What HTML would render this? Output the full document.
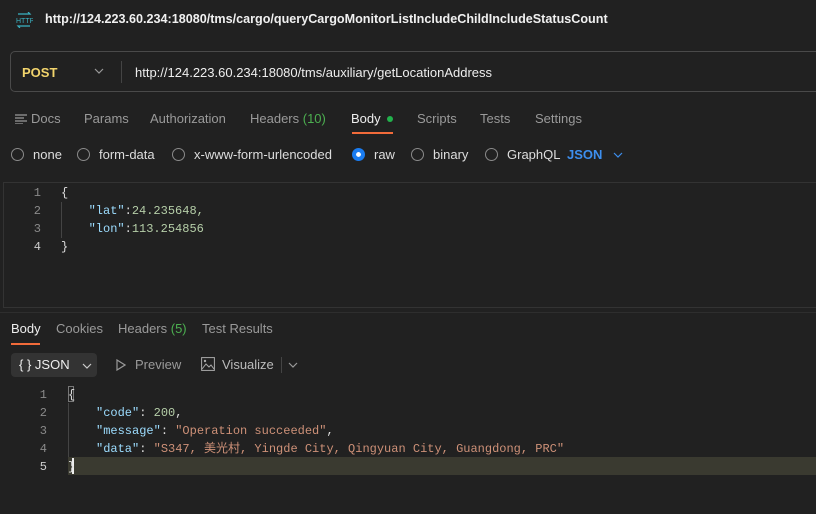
<html><head><style>
body{margin:0;width:816px;height:514px;background:#212121;font-family:"Liberation Sans",sans-serif;color:#ccc;position:relative;overflow:hidden}
.a{position:absolute;white-space:nowrap}
.m{font-family:"Liberation Mono","Noto Sans CJK SC",monospace;font-size:12px}
.r{width:13px;height:13px;border:1.3px solid #8a8a8a;border-radius:50%;box-sizing:border-box}
</style></head><body>
<svg class="a" style="left:15px;top:12px" width="18" height="16" viewBox="0 0 18 16"><path d="M3 2h12l-2-2M15 14H3l2 2" stroke="#3bb3c3" fill="none" stroke-width="1.2"/><text x="1" y="11" font-size="7" fill="#3bb3c3" font-family="Liberation Sans">HTTP</text></svg>
<div class="a" style="left:45px;top:12px;font-size:12.6px;font-weight:bold;color:#f0f0f0">http://124.223.60.234:18080/tms/cargo/queryCargoMonitorListIncludeChildIncludeStatusCount</div>
<div class="a" style="left:10px;top:51px;width:830px;height:41px;border:1px solid #4a4a4a;border-radius:5px;box-sizing:border-box"></div>
<div class="a" style="left:22px;top:65px;font-size:13px;font-weight:bold;color:#f2d46c">POST</div>
<svg class="a" style="left:94px;top:68px" width="10" height="7"><path d="M1 1l4 4 4-4" stroke="#999" fill="none" stroke-width="1.2"/></svg>
<div class="a" style="left:121px;top:61px;width:1px;height:22px;background:#444"></div>
<div class="a" style="left:135px;top:65px;font-size:13px;color:#eee">http://124.223.60.234:18080/tms/auxiliary/getLocationAddress</div>
<div class="a" style="top:111px;left:0;font-size:13px;color:#9a9a9a;width:816px;height:20px">
<svg class="a" style="left:15px;top:3px" width="12" height="10"><path d="M0 1h12M0 4h9M0 7h12M0 10h8" stroke="#999" stroke-width="1.2"/></svg>
<span class="a" style="left:31px">Docs</span><span class="a" style="left:84px">Params</span><span class="a" style="left:150px">Authorization</span><span class="a" style="left:250px">Headers <span style="color:#4caf50">(10)</span></span><span class="a" style="left:351px;color:#eee">Body</span><span class="a" style="left:387px;top:5px;width:6px;height:6px;border-radius:50%;background:#22b24c"></span><span class="a" style="left:417px">Scripts</span><span class="a" style="left:480px">Tests</span><span class="a" style="left:535px">Settings</span></div>
<div class="a" style="left:352px;top:132px;width:41px;height:2px;background:#f26b3a"></div>
<div class="a" style="top:147px;left:0;font-size:13px;color:#ddd;width:816px;height:20px">
<div class="a r" style="left:11px;top:1px"></div><span class="a" style="left:33px">none</span>
<div class="a r" style="left:77px;top:1px"></div><span class="a" style="left:99px">form-data</span>
<div class="a r" style="left:172px;top:1px"></div><span class="a" style="left:194px">x-www-form-urlencoded</span>
<div class="a r" style="left:352px;top:1px;background:#1a7cf0;border:4px solid #1a7cf0;box-shadow:inset 0 0 0 3px #fff"></div><span class="a" style="left:374px">raw</span>
<div class="a r" style="left:411px;top:1px"></div><span class="a" style="left:433px">binary</span>
<div class="a r" style="left:485px;top:1px"></div><span class="a" style="left:507px">GraphQL</span>
<span class="a" style="left:567px;color:#3d8fef;font-weight:bold">JSON</span>
<svg class="a" style="left:613px;top:5px" width="10" height="7"><path d="M1 1l4 4 4-4" stroke="#3d8fef" fill="none" stroke-width="1.2"/></svg></div>
<div class="a" style="left:3px;top:182px;width:830px;height:124px;border-top:1px solid #333;border-left:1px solid #333;border-bottom:1px solid #333"></div>
<div class="a m" style="left:0;top:184px;line-height:18px;width:816px">
<div class="a" style="left:30px;width:11px;text-align:right;color:#8a8a8a">1<br>2<br>3<br><span style="color:#ccc">4</span></div>
<div class="a" style="left:61px;top:18px;width:1px;height:36px;background:#444"></div>
<div class="a" style="left:61px;color:#ddd">{<br>&nbsp;&nbsp;&nbsp;<span style="color:#9cdcfe;margin-left:6px">"lat"</span>:<span style="color:#b5cea8">24.235648,</span><br>&nbsp;&nbsp;&nbsp;<span style="color:#9cdcfe;margin-left:6px">"lon"</span>:<span style="color:#b5cea8">113.254856</span><br>}</div></div>
<div class="a" style="left:0;top:312px;width:816px;height:1px;background:#2e2e2e"></div>
<div class="a" style="top:321px;left:0;font-size:13px;color:#9a9a9a;width:816px;height:20px">
<span class="a" style="left:11px;color:#eee">Body</span><span class="a" style="left:56px">Cookies</span><span class="a" style="left:118px">Headers <span style="color:#4caf50">(5)</span></span><span class="a" style="left:202px">Test Results</span></div>
<div class="a" style="left:11px;top:343px;width:29px;height:2px;background:#f26b3a"></div>
<div class="a" style="left:11px;top:353px;width:86px;height:24px;background:#333;border-radius:4px;font-size:13px;color:#eee"><span class="a" style="left:8px;top:4px">{ }&nbsp;JSON</span><svg class="a" style="left:71px;top:10px" width="10" height="7"><path d="M1 1l4 4 4-4" stroke="#ccc" fill="none" stroke-width="1.2"/></svg></div>
<svg class="a" style="left:116px;top:359px" width="10" height="12"><path d="M1 1l8 5-8 5z" stroke="#999" fill="none" stroke-width="1.2"/></svg>
<span class="a" style="left:135px;top:357px;font-size:13px;color:#9a9a9a">Preview</span>
<svg class="a" style="left:201px;top:357px" width="14" height="14"><rect x="0.6" y="0.6" width="12.8" height="12.8" stroke="#aaa" fill="none"/><path d="M1 12l4-5 3 3 2-2 3 4" stroke="#aaa" fill="none"/><circle cx="4" cy="4" r="1.2" fill="#aaa"/></svg>
<span class="a" style="left:222px;top:357px;font-size:13px;color:#bbb">Visualize</span>
<div class="a" style="left:281px;top:357px;width:1px;height:16px;background:#444"></div>
<svg class="a" style="left:288px;top:362px" width="10" height="7"><path d="M1 1l4 4 4-4" stroke="#999" fill="none" stroke-width="1.2"/></svg>
<div class="a" style="left:68px;top:457px;width:760px;height:18px;background:#3a3a30"></div>
<div class="a" style="left:68px;top:386px;width:6px;height:16px;border:1px solid #777;box-sizing:border-box"></div>
<div class="a" style="left:68px;top:403px;width:1px;height:54px;background:#444"></div>
<div class="a" style="left:72px;top:458px;width:2px;height:16px;background:#eee"></div>
<div class="a m" style="left:0;top:386px;line-height:18px;width:816px">
<div class="a" style="left:30px;width:17px;text-align:right;color:#8a8a8a">1<br>2<br>3<br>4<br><span style="color:#ccc">5</span></div>
<div class="a" style="left:68px;color:#ddd">{<br><span style="margin-left:28px;color:#9cdcfe">"code"</span>: <span style="color:#b5cea8">200</span>,<br><span style="margin-left:28px;color:#9cdcfe">"message"</span>: <span style="color:#ce9178">"Operation succeeded"</span>,<br><span style="margin-left:28px;color:#9cdcfe">"data"</span>: <span style="color:#ce9178">"S347, 美光村, Yingde City, Qingyuan City, Guangdong, PRC"</span><br>}</div></div>
</body></html>
